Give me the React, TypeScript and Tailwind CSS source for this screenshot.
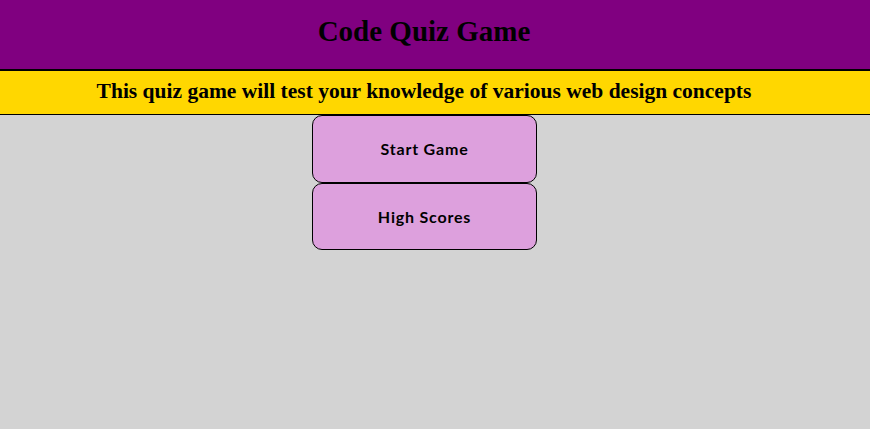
import React from "react";

const App = () => {
  return (
    <div className="min-h-[429px] bg-[#d3d3d3]">
      {/* ヘッダー */}
      <header className="h-[71px] border-b-2 border-black bg-[#800080] pr-[22px] text-center">
        <h1 className="pt-[15px] font-['Liberation_Serif',serif] text-[29px] font-bold leading-8 text-black">
          Code Quiz Game
        </h1>
      </header>
      {/* 説明 */}
      <div className="h-[44px] border-b border-black bg-[#ffd700] pr-[22px] text-center">
        <p className="pt-[8px] font-['Liberation_Serif',serif] text-[21.5px] font-bold leading-6 text-black">
          This quiz game will test your knowledge of various web design concepts
        </p>
      </div>
      <div className="flex flex-col items-center pr-[21px]">
        <button className="h-[68px] w-[225px] rounded-[10px] border border-black bg-[#dda0dd] font-['Lato',sans-serif] text-[16px] font-bold tracking-[0.8px] text-black">
          Start Game
        </button>
        <button className="h-[67px] w-[225px] rounded-[10px] border border-black bg-[#dda0dd] font-['Lato',sans-serif] text-[16px] font-bold tracking-[0.8px] text-black">
          High Scores
        </button>
      </div>
    </div>
  );
};

export default App;
